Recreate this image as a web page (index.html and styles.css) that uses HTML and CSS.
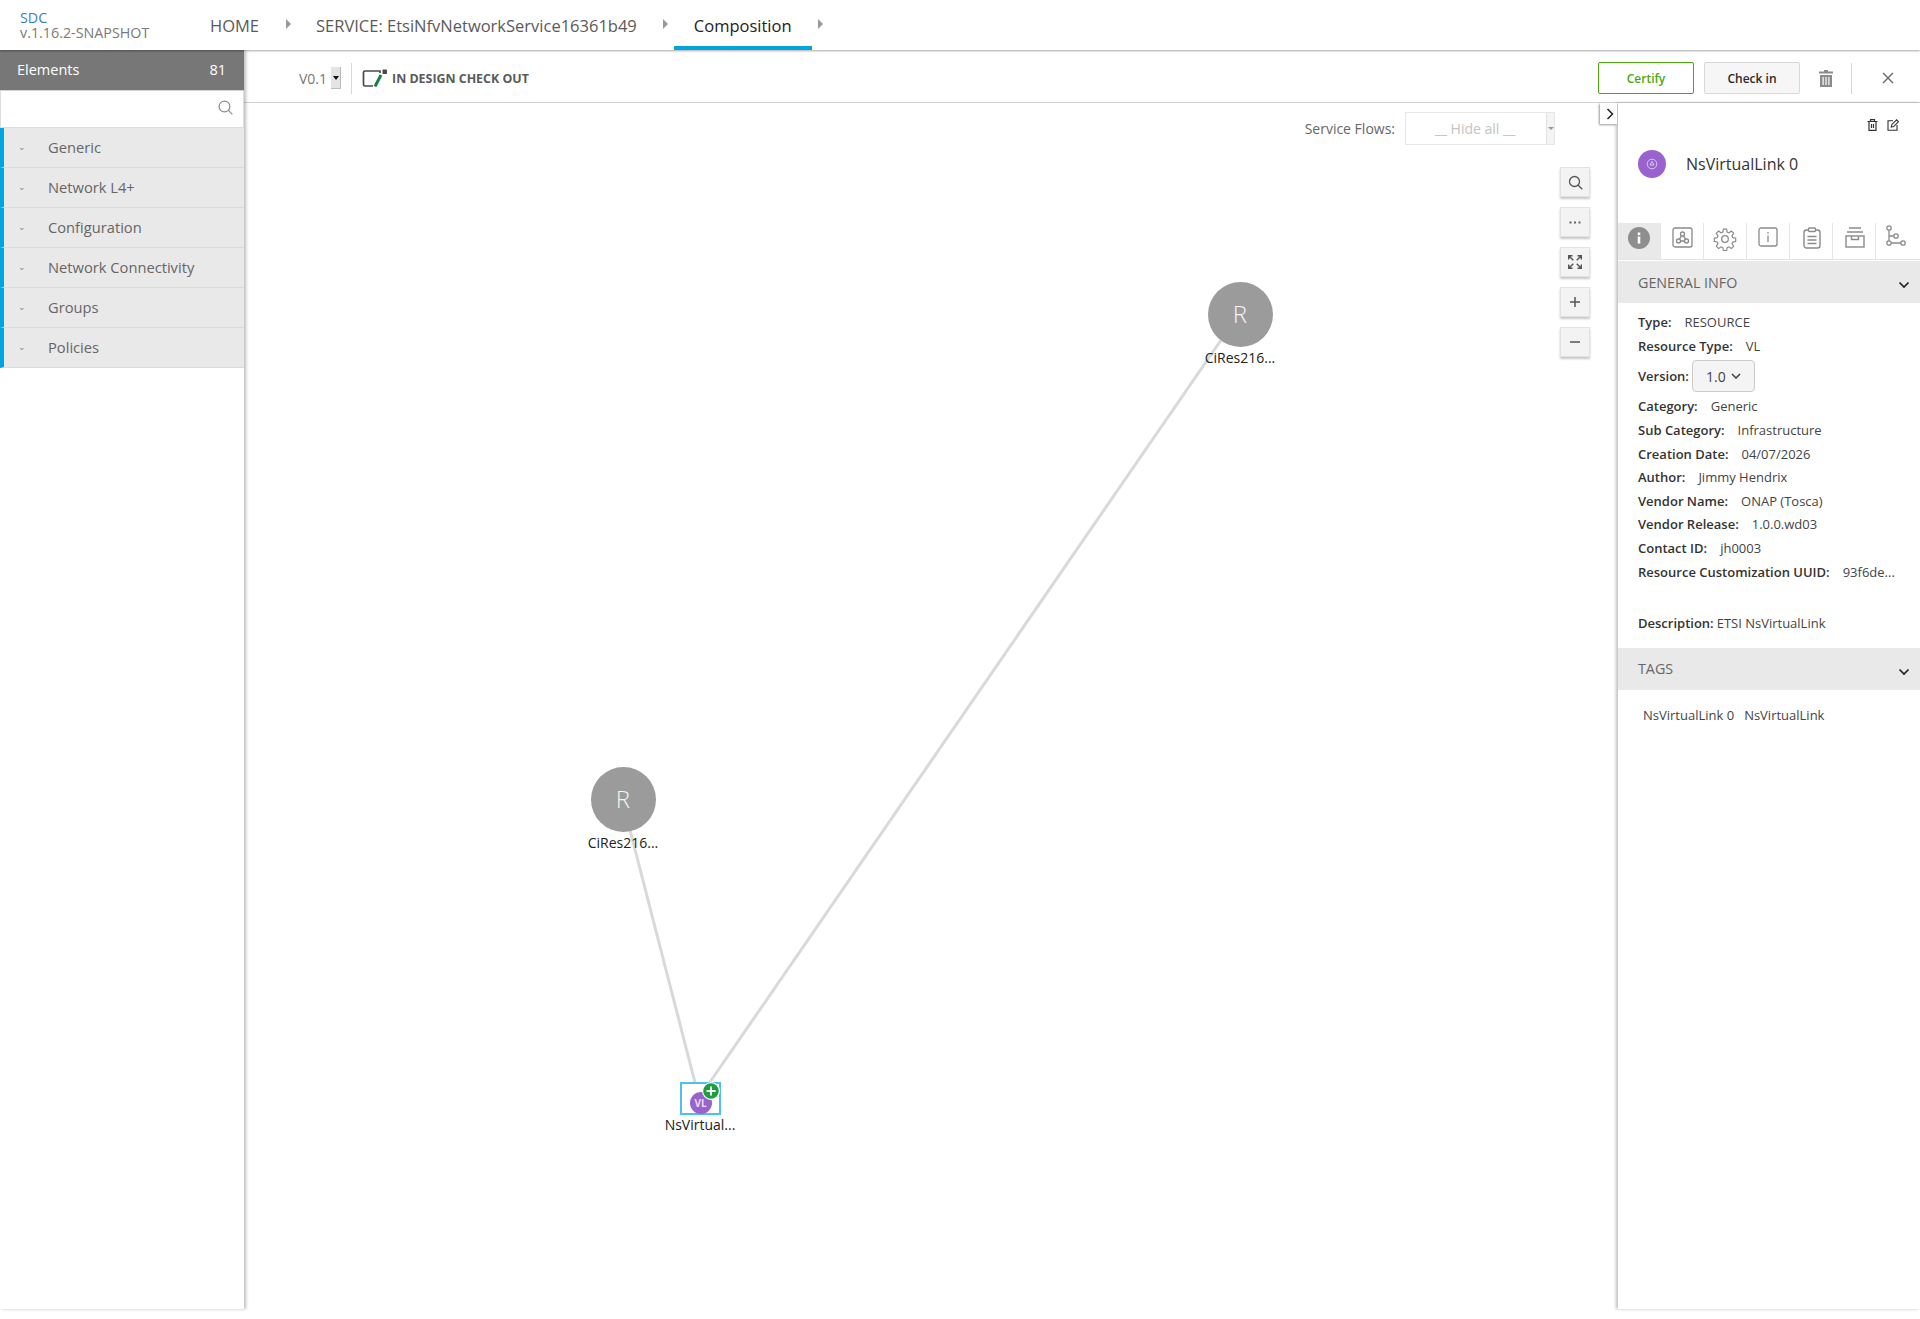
FILE: index.html
```html
<!DOCTYPE html>
<html lang="en">
  <head>
    <meta charset="UTF-8" />
    <title>SDC</title>
    <link rel="stylesheet" href="styles.css">
  </head>
  <body>
    <header class="top-nav">
      <div class="logo">
        <div class="logo-name">SDC</div>
        <div class="logo-version">v.1.16.2-SNAPSHOT</div>
      </div>
      <nav class="crumbs">
        <a class="crumb crumb-home">HOME</a>
        <span class="crumb-arrow"></span>
        <a class="crumb crumb-service">SERVICE: EtsiNfvNetworkService16361b49</a>
        <span class="crumb-arrow"></span>
        <a class="crumb crumb-active">Composition</a>
        <span class="crumb-arrow"></span>
      </nav>
    </header>

    <div class="main">
      <aside class="sidebar">
        <div class="sidebar-head"><span>Elements</span><span>81</span></div>
        <div class="sidebar-search">
          <svg width="15" height="15" viewBox="0 0 15 15" fill="none" stroke="#8c8c8c" stroke-width="1.200">
            <circle cx="6.500" cy="6.500" r="5.400" />
            <path d="M10.400 10.400l4 4" />
          </svg>
        </div>
        <ul class="groups">
          <li><span class="caret">&#8964;</span>Generic</li>
          <li><span class="caret">&#8964;</span>Network L4+</li>
          <li><span class="caret">&#8964;</span>Configuration</li>
          <li><span class="caret">&#8964;</span>Network Connectivity</li>
          <li><span class="caret">&#8964;</span>Groups</li>
          <li><span class="caret">&#8964;</span>Policies</li>
        </ul>
      </aside>

      <div class="workspace">
        <div class="toolbar">
          <span class="version">V0.1</span>
          <span class="version-select"><i></i></span>
          <span class="tool-sep"></span>
          <svg class="status-icon" width="26" height="18" viewBox="0 0 26 18" fill="none">
            <path d="M18 4V2H3a1.500 1.500 0 0 0-1.500 1.500v12A1.500 1.500 0 0 0 3 17h8" stroke="#4a4a4a" stroke-width="1.700" />
            <rect x="20.500" y="0.500" width="4.500" height="4.500" rx="0.800" fill="#4a4a4a" />
            <path d="M13 17.500l6-11.500" stroke="#14804a" stroke-width="3" />
          </svg>
          <span class="status-text">IN DESIGN CHECK OUT</span>
          <span class="tool-space"></span>
          <button class="btn btn-certify">Certify</button>
          <button class="btn btn-checkin">Check in</button>
          <svg class="tool-trash" width="14" height="17" viewBox="0 0 14 17" fill="#8a8a8a">
            <path d="M5 0h4v1.500h5V3.500H0V1.500h5z" />
            <path d="M1 5h12v12H1zM3.500 7v8h1.200V7zM6.400 7v8h1.200V7zM9.300 7v8h1.200V7z" fill-rule="evenodd" />
          </svg>
          <span class="tool-sep tool-sep-right"></span>
          <svg class="tool-close" width="12" height="12" viewBox="0 0 12 12" stroke="#666" stroke-width="1.400">
            <path d="M1 1l10 10M11 1L1 11" />
          </svg>
        </div>

        <div class="stage">
          <div class="canvas">
            <svg class="links" width="1372" height="1206">
              <line x1="378" y1="696" x2="455" y2="995" />
              <line x1="995" y1="211" x2="455" y2="995" />
            </svg>

            <div class="node node-one">
              <div class="node-r">R</div>
              <div class="node-label">CiRes216...</div>
            </div>
            <div class="node node-two">
              <div class="node-r">R</div>
              <div class="node-label">CiRes216...</div>
            </div>
            <div class="node node-vl">
              <div class="vl-box">
                <div class="vl-dot">VL</div>
                <svg class="vl-plus" width="18" height="18" viewBox="0 0 18 18">
                  <circle cx="9" cy="9" r="8.400" fill="#1e9e3e" stroke="#fff" stroke-width="1.200" />
                  <path d="M9 4.500v9M4.500 9h9" stroke="#fff" stroke-width="1.800" />
                </svg>
              </div>
              <div class="node-label">NsVirtual...</div>
            </div>

            <div class="flows">
              <span class="flows-label">Service Flows:</span>
              <span class="flows-select">
                <span class="flows-value">__ Hide all __</span>
                <span class="flows-arrow"><i></i></span>
              </span>
            </div>

            <div class="zoom-tools">
              <div class="zoom-btn">
                <svg width="15" height="15" viewBox="0 0 15 15" fill="none" stroke="#555" stroke-width="1.300">
                  <circle cx="6.500" cy="6.500" r="5" />
                  <path d="M10.200 10.200l4 4" />
                </svg>
              </div>
              <div class="zoom-btn">
                <svg width="12" height="3" viewBox="0 0 12 3" fill="#666">
                  <rect x="0.500" y="0.500" width="2" height="2" />
                  <rect x="5" y="0.500" width="2" height="2" />
                  <rect x="9.500" y="0.500" width="2" height="2" />
                </svg>
              </div>
              <div class="zoom-btn">
                <svg width="14" height="14" viewBox="0 0 14 14" fill="none" stroke="#555" stroke-width="1.400">
                  <path d="M0.700 4.500V0.700H4.500M0.700 0.700L5.300 5.300M13.300 4.500V0.700H9.500M13.300 0.700L8.700 5.300M0.700 9.500V13.300H4.500M0.700 13.300L5.300 8.700M13.300 9.500V13.300H9.500M13.300 13.300L8.700 8.700" />
                </svg>
              </div>
              <div class="zoom-btn">
                <svg width="12" height="12" viewBox="0 0 12 12" stroke="#555" stroke-width="1.500">
                  <path d="M6 1v10M1 6h10" />
                </svg>
              </div>
              <div class="zoom-btn">
                <svg width="12" height="12" viewBox="0 0 12 12" stroke="#555" stroke-width="1.500">
                  <path d="M1 6h10" />
                </svg>
              </div>
            </div>
          </div>

          <aside class="panel">
            <div class="panel-toggle">
              <svg width="8" height="12" viewBox="0 0 8 12" fill="none" stroke="#222" stroke-width="1.500">
                <path d="M1.500 1l5 5-5 5" />
              </svg>
            </div>
            <div class="panel-actions">
              <svg width="11" height="12" viewBox="0 0 11 12" fill="none" stroke="#333" stroke-width="1.200">
                <path d="M0.500 2.500h10M3.500 2.500V0.700h4v1.800M2 2.500v8.800h7V2.500M4.500 5v4M6.500 5v4" />
              </svg>
              <svg width="12" height="12" viewBox="0 0 12 12" fill="none" stroke="#333" stroke-width="1.100">
                <path d="M6 1.700H1v9.600h9V6" />
                <path d="M4.300 8l0.400-2.300L9.600 0.800l1.900 1.900-4.900 4.900z" />
              </svg>
            </div>
            <div class="panel-title">
              <span class="title-dot">
                <svg width="12" height="12" viewBox="0 0 12 12" fill="none" stroke="#d9c8f0" stroke-width="1">
                  <circle cx="6" cy="6" r="4.800" />
                  <path d="M6 3.500l-2 3.500h4z" />
                </svg>
              </span>
              <span class="title-name">NsVirtualLink 0</span>
            </div>

            <div class="panel-tabs">
              <div class="ptab ptab-on">
                <svg width="22" height="22" viewBox="0 0 22 22">
                  <circle cx="11" cy="11" r="11" fill="#8e8e8e" />
                  <rect x="9.700" y="9.500" width="2.600" height="7" fill="#fff" />
                  <rect x="9.700" y="5.500" width="2.600" height="2.600" fill="#fff" />
                </svg>
              </div>
              <div class="ptab">
                <svg width="21" height="21" viewBox="0 0 21 21" fill="none" stroke="#8a8a8a" stroke-width="1.300">
                  <rect x="1" y="1" width="19" height="19" rx="2" />
                  <circle cx="10.500" cy="7" r="2" />
                  <circle cx="6.500" cy="14" r="2" />
                  <circle cx="14.500" cy="14" r="2" />
                  <path d="M9.500 8.800l-2 3.400M11.500 8.800l2 3.400M8.500 14h4" />
                </svg>
              </div>
              <div class="ptab">
                <svg width="24" height="24" viewBox="0 0 24 24" fill="none" stroke="#8a8a8a" stroke-width="1.300">
                  <circle cx="12" cy="12" r="3.300" />
                  <path d="M10.200 1h3.600l.6 3.200 2 .9 2.700-1.900 2.600 2.600-1.900 2.700.9 2 3.200.6v3.600l-3.200.6-.9 2 1.900 2.700-2.600 2.600-2.700-1.900-2 .9-.6 3.200h-3.600l-.6-3.200-2-.9-2.700 1.900-2.600-2.600 1.900-2.700-.9-2-3.200-.6v-3.600l3.200-.6.9-2-1.900-2.700 2.600-2.600 2.700 1.900 2-.9z" transform="translate(1.200 1.200) scale(.9)" />
                </svg>
              </div>
              <div class="ptab">
                <svg width="20" height="20" viewBox="0 0 20 20" fill="none" stroke="#8a8a8a" stroke-width="1.300">
                  <rect x="1" y="1" width="18" height="18" rx="2" />
                  <path d="M10 8.500v6.500M10 5v1.600" />
                </svg>
              </div>
              <div class="ptab ptab-nudge">
                <svg width="18" height="22" viewBox="0 0 18 22" fill="none" stroke="#8a8a8a" stroke-width="1.400">
                  <rect x="1" y="3" width="16" height="18" rx="2.500" />
                  <rect x="5.500" y="1" width="7" height="3.500" rx="1" fill="#fff" />
                  <path d="M4.500 9.500h9M4.500 13h9M4.500 16.500h9" />
                </svg>
              </div>
              <div class="ptab ptab-nudge">
                <svg width="20" height="21" viewBox="0 0 20 21" fill="none" stroke="#8a8a8a" stroke-width="1.400">
                  <path d="M4 1h12M2 5h16" />
                  <rect x="1" y="9" width="18" height="11" />
                  <path d="M6.500 9v3.500h7V9" />
                </svg>
              </div>
              <div class="ptab ptab-last">
                <svg width="20" height="22" viewBox="0 0 20 22" fill="none" stroke="#8a8a8a" stroke-width="1.300">
                  <circle cx="3" cy="3" r="2.200" />
                  <circle cx="3" cy="18" r="2.200" />
                  <circle cx="17" cy="18" r="2.200" />
                  <circle cx="10" cy="11" r="2.200" />
                  <path d="M3 5.200v10.600M5.200 18H14.800M3 11H7.800" />
                </svg>
              </div>
            </div>

            <div class="section-head">
              <span>GENERAL INFO</span>
              <svg width="12" height="8" viewBox="0 0 12 8" fill="none" stroke="#222" stroke-width="1.700">
                <path d="M1.500 1.500L6 6l4.500-4.500" />
              </svg>
            </div>
            <div class="info">
              <div class="row"><b>Type:</b><span>RESOURCE</span></div>
              <div class="row"><b>Resource Type:</b><span>VL</span></div>
              <div class="row row-version">
                <b>Version:</b>
                <span class="version-btn">1.0
                  <svg width="10" height="6" viewBox="0 0 10 6" fill="none" stroke="#444" stroke-width="1.600">
                    <path d="M1 1l4 4 4-4" />
                  </svg>
                </span>
              </div>
              <div class="row"><b>Category:</b><span>Generic</span></div>
              <div class="row"><b>Sub Category:</b><span>Infrastructure</span></div>
              <div class="row"><b>Creation Date:</b><span>04/07/2026</span></div>
              <div class="row"><b>Author:</b><span>Jimmy Hendrix</span></div>
              <div class="row"><b>Vendor Name:</b><span>ONAP (Tosca)</span></div>
              <div class="row"><b>Vendor Release:</b><span>1.0.0.wd03</span></div>
              <div class="row"><b>Contact ID:</b><span>jh0003</span></div>
              <div class="row"><b>Resource Customization UUID:</b><span>93f6de...</span></div>
              <div class="row row-desc"><b>Description:</b><span>ETSI NsVirtualLink</span></div>
            </div>
            <div class="section-head section-tags">
              <span>TAGS</span>
              <svg width="12" height="8" viewBox="0 0 12 8" fill="none" stroke="#222" stroke-width="1.700">
                <path d="M1.500 1.500L6 6l4.500-4.500" />
              </svg>
            </div>
            <div class="tags"><span>NsVirtualLink 0</span><span>NsVirtualLink</span></div>
          </aside>
        </div>
      </div>
    </div>
  </body>
</html>
```

FILE: styles.css
```css
* {
  box-sizing: border-box;
}
body {
  margin: 0;
  height: 1319px;
  overflow: hidden;
  background: #fff;
  font-family: "Open Sans", "Liberation Sans", sans-serif;
  color: #5a5a5a;
}

/* top bar */
.top-nav {
  position: relative;
  z-index: 3;
  display: flex;
  height: 50px;
  background: #fff;
  box-shadow: 0 1px 2px rgba(0, 0, 0, 0.35);
}
.logo {
  width: 210px;
  padding: 10px 0 0 20px;
  font-size: 14.300px;
  line-height: 15px;
}
.logo-name {
  color: #3a7fc1;
}
.logo-version {
  color: #7a7a7a;
}
.crumbs {
  display: flex;
  align-items: flex-start;
}
.crumb {
  height: 50px;
  font-size: 16.500px;
  line-height: 51px;
  color: #5a5a5a;
}
.crumb-arrow {
  width: 0;
  height: 0;
  margin: 19px 0 0 0;
  border-left: 5px solid #999;
  border-top: 5px solid transparent;
  border-bottom: 5px solid transparent;
}
.crumb-home {
  margin-right: 27px;
}
.crumb-service {
  margin: 0 26px 0 25px;
}
.crumb-active {
  margin: 0 6px;
  padding: 0 20px;
  color: #222;
  font-weight: 500;
  border-bottom: 4px solid #00a5e0;
}

.main {
  display: flex;
  height: 1259px;
}

/* left palette */
.sidebar {
  position: relative;
  z-index: 2;
  flex: none;
  width: 244px;
  box-shadow: 2px 0 3px rgba(0, 0, 0, 0.25);
}
.sidebar-head {
  display: flex;
  justify-content: space-between;
  height: 40px;
  padding: 0 18px 0 17px;
  background: #777;
  color: #fff;
  font-size: 14.500px;
  font-weight: 500;
  line-height: 39px;
}
.sidebar-search {
  display: flex;
  justify-content: flex-end;
  align-items: center;
  height: 38px;
  padding: 0 10px 4px 0;
  border: 1px solid #ddd;
  border-top-color: #d0d0d0;
}
.groups {
  margin: 0;
  padding: 0;
  list-style: none;
}
.groups li {
  display: flex;
  height: 40px;
  border-left: 4px solid #00a5e0;
  border-bottom: 1px solid #dcdcdc;
  background: #e9e9e9;
  font-size: 14.700px;
  font-weight: 500;
  line-height: 39px;
  color: #666;
}
.caret {
  width: 44px;
  padding-left: 14px;
  font-size: 9px;
  line-height: 37px;
  color: #888;
}

/* toolbar over the canvas */
.workspace {
  flex: 1;
  display: flex;
  flex-direction: column;
  min-width: 0;
}
.toolbar {
  display: flex;
  align-items: center;
  flex: none;
  height: 53px;
  padding: 4px 26px 0 55px;
  border-bottom: 1px solid #d2d2d2;
}
.version {
  font-size: 14px;
  color: #777;
}
.version-select {
  display: flex;
  justify-content: center;
  align-items: center;
  width: 10px;
  height: 22px;
  margin-left: 4px;
  background: #e4e4e4;
  border-right: 1px solid #bbb;
  border-bottom: 1px solid #bbb;
}
.version-select i {
  border-top: 4px solid #111;
  border-left: 3px solid transparent;
  border-right: 3px solid transparent;
}
.tool-sep {
  width: 1px;
  height: 31px;
  margin: 0 10px;
  background: #d8d8d8;
}
.status-icon {
  margin-right: 4px;
}
.status-text {
  font-size: 12.400px;
  font-weight: 700;
  color: #5a5a5a;
}
.tool-space {
  flex: 1;
}
.btn {
  width: 96px;
  height: 32px;
  padding: 0;
  border-radius: 2px;
  font-family: inherit;
  font-size: 12px;
  font-weight: 600;
}
.btn-certify {
  border: 1px solid #4ca90c;
  background: #fff;
  color: #4ca90c;
}
.btn-checkin {
  margin: 0 19px 0 10px;
  border: 1px solid #d8d8d8;
  background: #f6f6f6;
  color: #2a2a2a;
}
.tool-sep-right {
  margin: 0 30px 0 18px;
}

/* canvas */
.stage {
  flex: 1;
  display: flex;
  min-height: 0;
}
.canvas {
  position: relative;
  flex: 1;
  min-width: 0;
}
.links {
  position: absolute;
  left: 0;
  top: 0;
}
.links line {
  stroke: #d9d9d9;
  stroke-width: 3;
}
.node {
  position: absolute;
  width: 100px;
  text-align: center;
}
.node-one {
  left: 946px;
  top: 179px;
}
.node-two {
  left: 329px;
  top: 664px;
}
.node-vl {
  left: 406px;
  top: 979px;
}
.node-r {
  width: 65px;
  height: 65px;
  margin: 0 auto;
  border-radius: 50%;
  background: #9b9b9b;
  color: #f4f4f4;
  font-size: 24px;
  font-weight: 300;
  line-height: 64px;
}
.node-label {
  font-size: 14px;
  line-height: 19px;
  color: #222;
}
.node-one .node-label,
.node-two .node-label {
  margin-top: 1px;
}
.vl-box {
  position: relative;
  width: 41px;
  height: 33px;
  margin: 0 auto;
  background: #fff;
  border: 2px solid #4cc1f0;
}
.vl-dot {
  position: absolute;
  left: 8px;
  top: 8px;
  width: 22px;
  height: 22px;
  border-radius: 50%;
  background: #9a62cf;
  color: #eadcf7;
  font-size: 10px;
  font-weight: 700;
  line-height: 22px;
}
.vl-plus {
  position: absolute;
  left: 20px;
  top: -2px;
}
.flows {
  position: absolute;
  top: 9px;
  right: 63px;
  display: flex;
  align-items: center;
}
.flows-label {
  margin-right: 10px;
  font-size: 14px;
  color: #666;
}
.flows-select {
  display: flex;
  width: 150px;
  height: 33px;
  border: 1px solid #e6e6e6;
}
.flows-value {
  flex: 1;
  padding-right: 2px;
  font-size: 14px;
  line-height: 31px;
  text-align: center;
  color: #c4c4c4;
}
.flows-arrow {
  display: flex;
  justify-content: center;
  align-items: center;
  width: 8px;
  background: #f4f4f4;
  border-left: 1px solid #e2e2e2;
}
.flows-arrow i {
  border-top: 3px solid #999;
  border-left: 3px solid transparent;
  border-right: 3px solid transparent;
}
.zoom-tools {
  position: absolute;
  top: 64px;
  right: 28px;
  display: flex;
  flex-direction: column;
  gap: 10px;
}
.zoom-btn {
  display: flex;
  justify-content: center;
  align-items: center;
  width: 30px;
  height: 30px;
  background: #f3f3f3;
  border: 1px solid #e2e2e2;
  box-shadow: 0 2px 2px rgba(0, 0, 0, 0.22);
}

/* right details panel */
.panel {
  position: relative;
  flex: none;
  width: 302px;
  box-shadow: -2px 0 3px rgba(0, 0, 0, 0.25);
}
.panel-toggle {
  position: absolute;
  left: -18px;
  top: 0;
  display: flex;
  justify-content: center;
  align-items: center;
  width: 17px;
  height: 21px;
  padding-left: 2px;
  background: #fff;
  box-shadow: -1px 1px 2px rgba(0, 0, 0, 0.4);
}
.panel-actions {
  display: flex;
  justify-content: flex-end;
  gap: 9px;
  height: 47px;
  padding: 16px 21px 0 0;
}
.panel-title {
  display: flex;
  align-items: center;
  height: 28px;
  padding-left: 20px;
}
.title-dot {
  display: flex;
  justify-content: center;
  align-items: center;
  width: 28px;
  height: 28px;
  border-radius: 50%;
  background: #9a62cf;
}
.title-name {
  margin-left: 20px;
  font-size: 16px;
  color: #333;
}
.panel-tabs {
  display: flex;
  height: 37px;
  margin-top: 45px;
  border-bottom: 1px solid #e4e4e4;
}
.ptab {
  display: flex;
  justify-content: center;
  align-items: flex-start;
  padding-top: 4px;
  width: 43px;
  border-right: 1px solid #e6e6e6;
}
.ptab-on {
  background: #e9e9e9;
  padding-right: 1px;
}
.ptab-nudge {
  padding-left: 2px;
}
.ptab-last {
  flex: 1;
  border-right: none;
  padding: 2px 4px 0 0;
}
.section-head {
  display: flex;
  justify-content: space-between;
  align-items: center;
  height: 42px;
  margin-top: 1px;
  padding: 0 10px 0 20px;
  background: #e9e9e9;
  font-size: 14.300px;
  font-weight: 500;
  color: #666;
}
.section-head svg {
  margin-top: 6px;
}
.info {
  padding: 7.400px 10px 0 20px;
  font-size: 13px;
  color: #444;
}
.row {
  display: flex;
  align-items: center;
  gap: 13px;
  height: 23.600px;
  white-space: nowrap;
}
.row b {
  font-weight: 600;
  color: #333;
}
.row-version {
  height: 37px;
  gap: 3px;
}
.version-btn {
  display: flex;
  align-items: center;
  justify-content: center;
  gap: 5px;
  width: 63px;
  height: 32px;
  border: 1px solid #ccc;
  border-radius: 4px;
  background: #f4f4f4;
  font-size: 14px;
  color: #444;
}
.row-desc {
  gap: 3px;
  margin-top: 28px;
}
.section-tags {
  margin-top: 13px;
}
.tags {
  display: flex;
  gap: 10px;
  padding: 16px 0 0 25px;
  font-size: 13px;
  line-height: 19px;
  color: #444;
}
```
